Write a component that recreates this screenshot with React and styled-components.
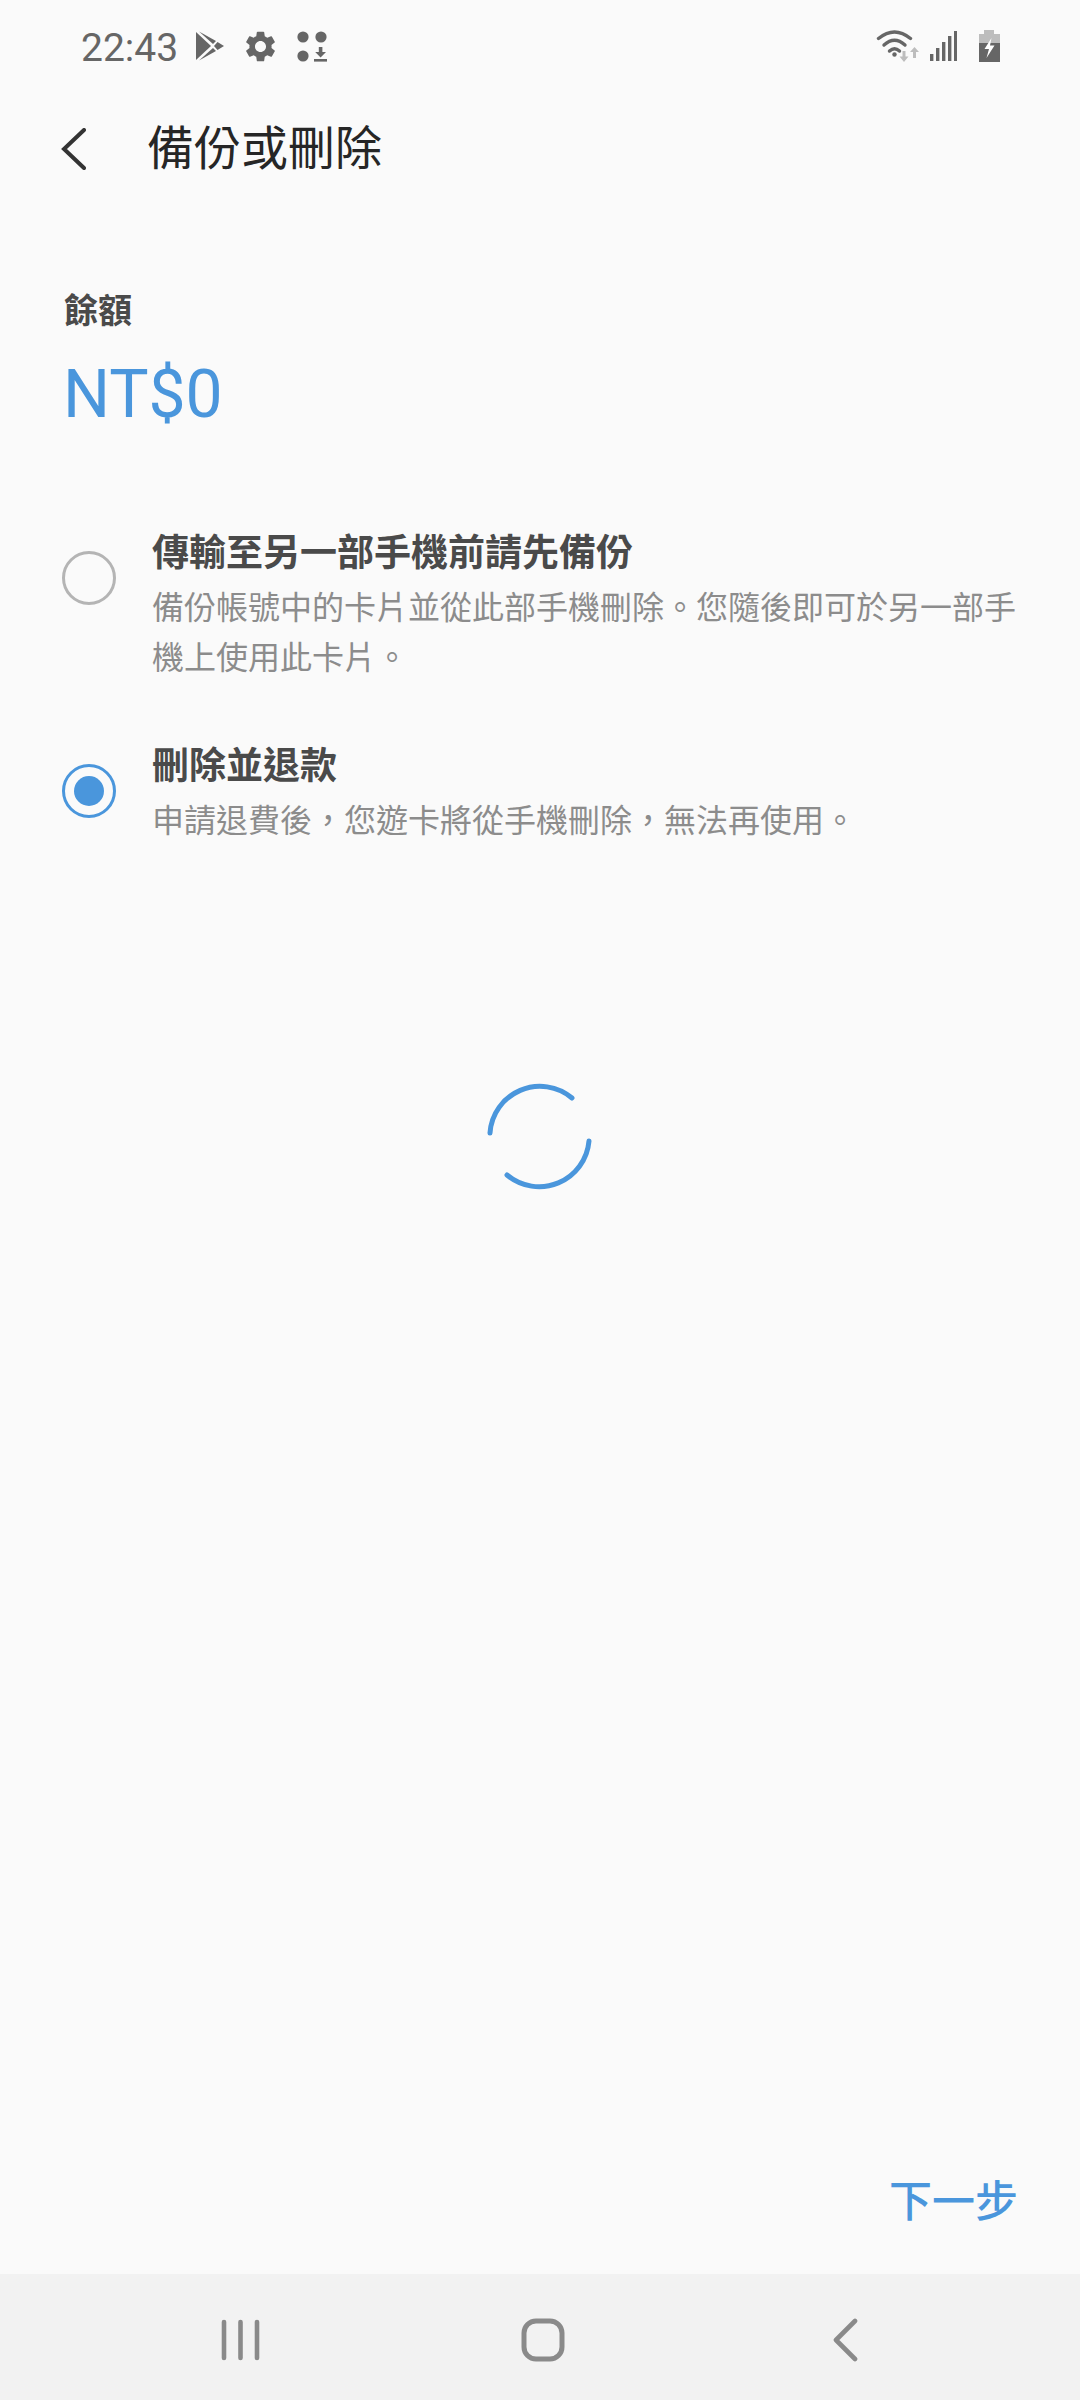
import React from "react";
import styled, { createGlobalStyle } from "styled-components";
import { MdSettings } from "react-icons/md";

const Global = createGlobalStyle`
  html, body { margin: 0; padding: 0; background: #fafafa; }
  * { box-sizing: border-box; }
`;

const FONT = `Roboto, "Noto Sans CJK TC", "Noto Sans CJK SC", sans-serif`;
const BLUE = "#4a96dc";

const Page = styled.div`
  width: 1080px;
  height: 2400px;
  display: flex;
  flex-direction: column;
  background: #fafafa;
  font-family: ${FONT};
  overflow: hidden;
`;

const StatusBar = styled.header`
  height: 92px;
  padding: 0 80px 0 81px;
  display: flex;
  align-items: center;
  justify-content: space-between;
  color: #666;
`;
const StatusGroup = styled.div`
  display: flex;
  align-items: center;
  gap: ${(p) => p.$gap}px;
`;
const BatterySlot = styled.div`
  display: flex;
  margin-left: 12px;
`;
const Time = styled.span`
  font-size: 39px;
  line-height: 46px;
  padding-top: 3px;
  color: #666;
`;

const AppBar = styled.div`
  height: 114px;
  padding-left: 60px;
  display: flex;
  align-items: center;
  gap: 61px;
`;
const Title = styled.h1`
  margin: 0;
  font-size: 47px;
  line-height: 60px;
  font-weight: 400;
  color: #262626;
`;

const Content = styled.main`
  flex: 1;
  display: flex;
  flex-direction: column;
  padding: 82px 60px 0 64px;
`;
const BalanceLabel = styled.div`
  font-size: 34px;
  line-height: 46px;
  font-weight: 700;
  color: #4a4a4a;
`;
const Amount = styled.div`
  margin-top: 21px;
  font-size: 66px;
  line-height: 80px;
  margin-left: -1px;
  color: ${BLUE};
`;
const Option = styled.div`
  margin-top: ${(p) => p.$top}px;
  display: flex;
  align-items: flex-start;
  gap: 36px;
  margin-left: -2px;
`;
const Radio = styled.div`
  flex: none;
  width: 54px;
  height: 54px;
  margin-top: 20px;
  border-radius: 50%;
  border: 3px solid ${(p) => (p.$on ? BLUE : "#b4b4b4")};
  display: flex;
  align-items: center;
  justify-content: center;
`;
const RadioDot = styled.div`
  width: 30px;
  height: 30px;
  border-radius: 50%;
  background: ${BLUE};
`;
const OptionText = styled.div`
  flex: 1;
`;
const OptionTitle = styled.div`
  font-size: 37px;
  line-height: 46px;
  font-weight: 700;
  color: #4a4a4a;
`;
const OptionDesc = styled.div`
  margin-top: 6px;
  font-size: 32px;
  line-height: 50px;
  color: #8c8c8c;
`;

const SpinnerWrap = styled.div`
  margin-top: 230px;
  margin-left: -64px;
  width: 1080px;
  display: flex;
  justify-content: center;
`;

const Footer = styled.div`
  height: 102px;
  padding: 0 62px 42px 0;
  display: flex;
  align-items: center;
  justify-content: flex-end;
`;
const NextButton = styled.span`
  font-size: 43px;
  line-height: 60px;
  font-weight: 500;
  color: ${BLUE};
`;

const NavBar = styled.nav`
  height: 126px;
  padding: 6px 222px 0 220px;
  background: #f2f2f2;
  display: flex;
  align-items: center;
  justify-content: space-between;
`;

const PlayIcon = () => (
  <svg width="28" height="30" viewBox="0 0 28 30" fill="#666">
    <path d="M0 1 15 15 0 29Z" />
    <path d="M3 0.5 20 10 17 13Z" />
    <path d="M3 29.5 20 20 17 17Z" />
    <path d="M21.5 11 28 15 21.5 19 18 15Z" />
  </svg>
);

const AppsIcon = () => (
  <svg width="30" height="31" viewBox="0 0 30 31" fill="#666">
    <circle cx="6" cy="6" r="5.6" />
    <circle cx="24" cy="6" r="5.6" />
    <circle cx="6" cy="25" r="5.6" />
    <path d="M21.8 16h3.6v5h3.6L23.6 26.5 18.2 21h3.6Z" />
    <rect x="17" y="28" width="13" height="2.6" />
  </svg>
);

const WifiIcon = () => (
  <svg width="44" height="34" viewBox="0 0 44 34" fill="none">
    <g stroke="#666" strokeWidth="3.4" strokeLinecap="round">
      <path d="M2.5 9.5Q18.5 -3.5 34.5 9.5" />
      <path d="M8 16Q18.5 6.5 29 16" />
      <path d="M13.5 22Q18.5 17.5 23.5 22" />
    </g>
    <circle cx="18.5" cy="25.5" r="2.2" fill="#666" />
    <path d="M26.5 22h3v5.5H32.5L28 33 23.5 27.5H26.5Z" fill="#bdbdbd" />
    <path d="M37 29h3v-6H43L38.5 18 34 23h3Z" fill="#bdbdbd" />
  </svg>
);

const SignalIcon = () => (
  <svg width="27" height="30" viewBox="0 0 27 30" fill="#666">
    <rect x="0" y="23" width="3.4" height="7" />
    <rect x="6" y="17" width="3.4" height="13" />
    <rect x="12" y="11" width="3.4" height="19" />
    <rect x="18" y="5" width="3.4" height="25" />
    <rect x="24" y="0" width="3.4" height="30" />
  </svg>
);

const BatteryIcon = () => (
  <svg width="21" height="32" viewBox="0 0 21 32">
    <rect x="5" y="0" width="10" height="5" fill="#bdbdbd" />
    <rect x="0" y="4" width="21" height="10" fill="#bdbdbd" />
    <rect x="0" y="13" width="21" height="19" fill="#666" />
    <path d="M12.5 8 5.5 19H10L7.5 28 15.5 15.5H11Z" fill="#fff" />
  </svg>
);

const BackChevron = () => (
  <svg width="26" height="42" viewBox="0 0 26 42" fill="none">
    <path d="M24 2 4 21 24 40" stroke="#333" strokeWidth="4" strokeLinecap="round" strokeLinejoin="miter" />
  </svg>
);

const Spinner = () => (
  <svg width="120" height="120" viewBox="0 0 120 120" fill="none">
    <g stroke={BLUE} strokeWidth="5" strokeLinecap="round">
      <path d="M10 57A50 50 0 0 1 92 22" />
      <path d="M109 65A50 50 0 0 1 27 99" />
    </g>
  </svg>
);

const RecentsIcon = () => (
  <svg width="40" height="42" viewBox="0 0 40 42" fill="none">
    <g stroke="#8a8a8a" strokeWidth="4.6" strokeLinecap="round">
      <path d="M4 3V39" />
      <path d="M20.5 3V39" />
      <path d="M37 3V39" />
    </g>
  </svg>
);
const HomeIcon = () => (
  <svg width="48" height="44" viewBox="0 0 48 44" fill="none">
    <rect x="5" y="3" width="38" height="38" rx="12" stroke="#8a8a8a" strokeWidth="5" />
  </svg>
);
const NavBackIcon = () => (
  <svg width="32" height="44" viewBox="0 0 32 44" fill="none">
    <path d="M29 3 10 22 29 41" stroke="#8a8a8a" strokeWidth="4.6" strokeLinecap="round" strokeLinejoin="round" />
  </svg>
);

export default function App() {
  return (
    <Page>
      <Global />
      <StatusBar>
        <StatusGroup $gap={18}>
          <Time>22:43</Time>
          <PlayIcon />
          <MdSettings size={37} color="#666" />
          <AppsIcon />
        </StatusGroup>
        <StatusGroup $gap={10}>
          <WifiIcon />
          <SignalIcon />
          <BatterySlot>
            <BatteryIcon />
          </BatterySlot>
        </StatusGroup>
      </StatusBar>
      <AppBar>
        <BackChevron />
        <Title>備份或刪除</Title>
      </AppBar>
      <Content>
        <BalanceLabel>餘額</BalanceLabel>
        <Amount>NT$0</Amount>
        <Option $top={96}>
          <Radio />
          <OptionText>
            <OptionTitle>傳輸至另一部手機前請先備份</OptionTitle>
            <OptionDesc>備份帳號中的卡片並從此部手機刪除。您隨後即可於另一部手機上使用此卡片。</OptionDesc>
          </OptionText>
        </Option>
        <Option $top={61}>
          <Radio $on>
            <RadioDot />
          </Radio>
          <OptionText>
            <OptionTitle>刪除並退款</OptionTitle>
            <OptionDesc>申請退費後，您遊卡將從手機刪除，無法再使用。</OptionDesc>
          </OptionText>
        </Option>
        <SpinnerWrap>
          <Spinner />
        </SpinnerWrap>
      </Content>
      <Footer>
        <NextButton>下一步</NextButton>
      </Footer>
      <NavBar>
        <RecentsIcon />
        <HomeIcon />
        <NavBackIcon />
      </NavBar>
    </Page>
  );
}
